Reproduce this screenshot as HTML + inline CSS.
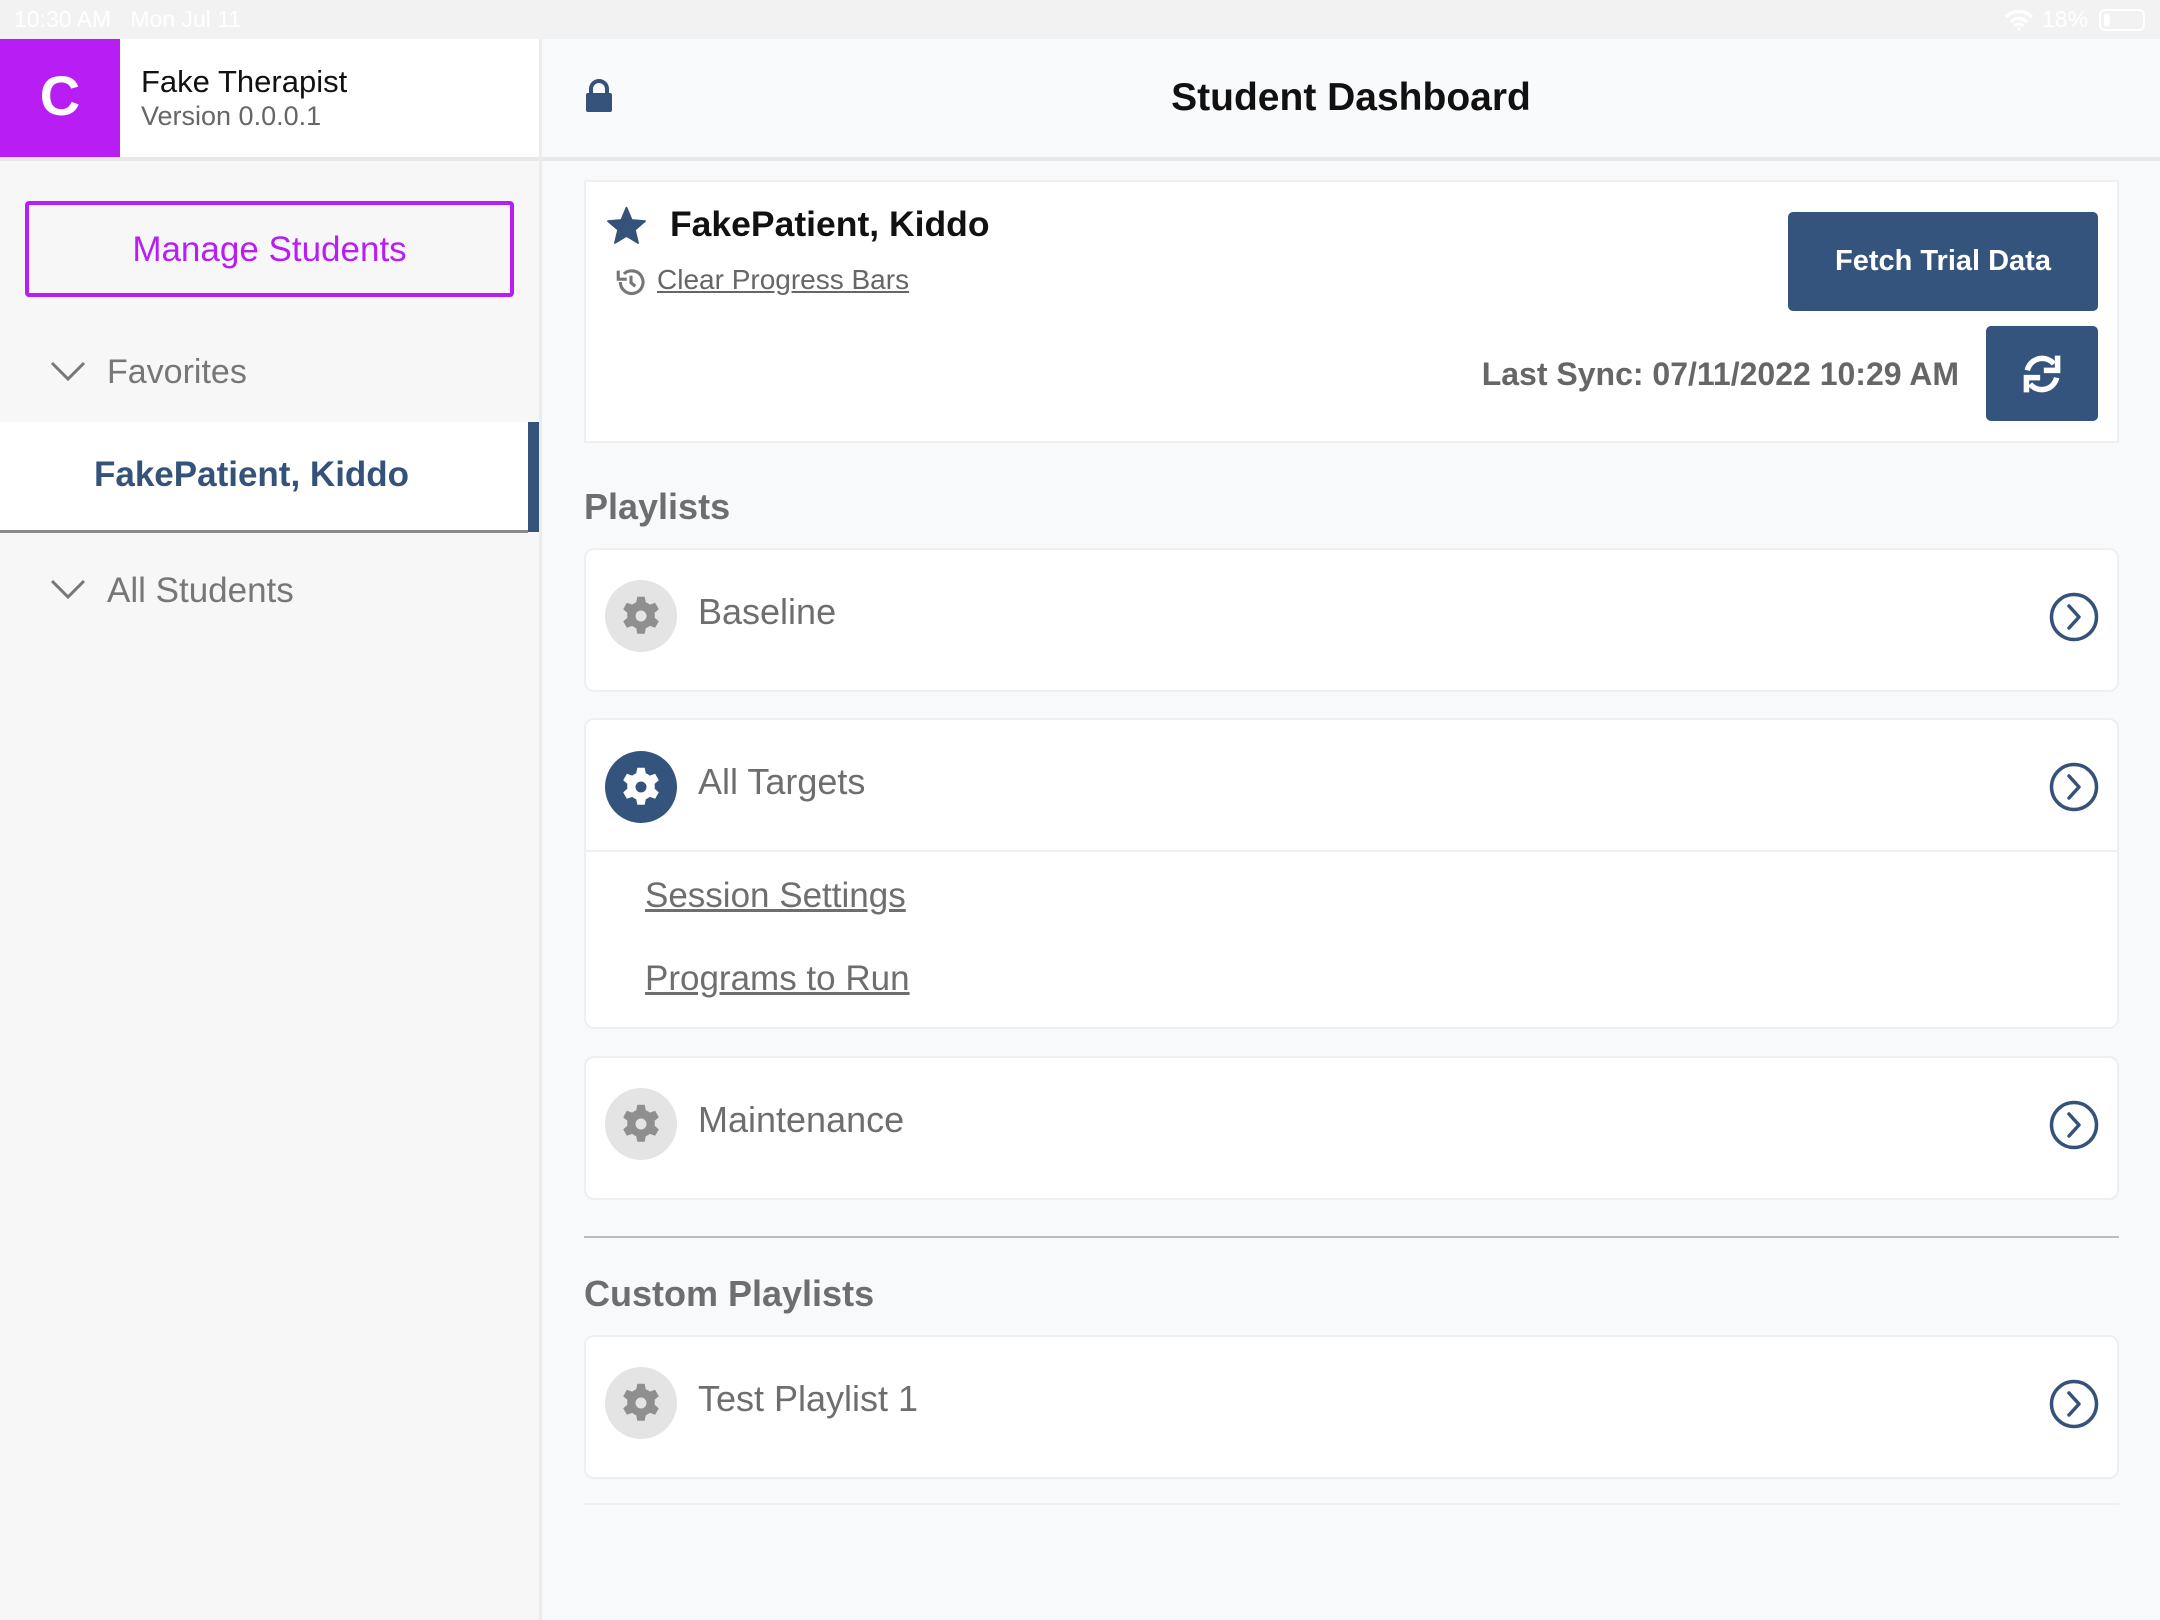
<!DOCTYPE html>
<html><head><meta charset="utf-8"><style>
*{margin:0;padding:0;box-sizing:border-box}
body{width:2160px;height:1620px;position:relative;overflow:hidden;background:#f8f9fb;font-family:"Liberation Sans",sans-serif}
.a{position:absolute}
.t{position:absolute;white-space:nowrap;line-height:1}
.card{position:absolute;background:#fff;border:2px solid #efefef;border-radius:10px;left:584px;width:1535px}
.gear{position:absolute;left:605px;width:72px;height:72px;border-radius:50%;background:#e4e4e4}
.gear svg{position:absolute;left:14px;top:14px}
.lbl{position:absolute;left:698px;font-size:36px;color:#6e6e6e;font-weight:500;line-height:1}
.chev{position:absolute;left:2049px}
</style></head><body>
<div class="a" style="left:0;top:0;width:2160px;height:39px;background:#f2f2f2"></div>
<div class="t" style="left:14px;top:8px;font-size:23px;color:#fff">10:30 AM&nbsp;&nbsp;&nbsp;Mon Jul 11</div>
<div class="t" style="left:2042px;top:8px;font-size:23px;color:#fff">18%</div>
<svg class="a" style="left:2004px;top:9px" width="30" height="22" viewBox="0 0 30 22"><path d="M2 8 A18 18 0 0 1 28 8 M7 13 A11 11 0 0 1 23 13 M11 17 A5 5 0 0 1 19 17" stroke="#fff" stroke-width="3.5" fill="none"/><circle cx="15" cy="20" r="2" fill="#fff"/></svg>
<div class="a" style="left:2099px;top:9px;width:46px;height:22px;border:2px solid #fff;border-radius:6px"><div style="margin:3px;width:6px;height:12px;background:#fff;border-radius:2px"></div></div>

<div class="a" style="left:0;top:39px;width:540px;height:1581px;background:#f7f7f7"></div>
<div class="a" style="left:120px;top:39px;width:420px;height:118px;background:#fff"></div>
<div class="a" style="left:0;top:157px;width:540px;height:4px;background:#e8e8e8"></div>
<div class="a" style="left:0;top:39px;width:120px;height:118px;background:#b81ef4"></div>
<div class="t" style="left:0;top:68px;width:120px;text-align:center;font-size:56px;font-weight:bold;color:#fff">C</div>
<div class="t" style="left:141px;top:66px;font-size:31px;color:#111">Fake Therapist</div>
<div class="t" style="left:141px;top:103px;font-size:27px;color:#666">Version 0.0.0.1</div>
<div class="a" style="left:25px;top:201px;width:489px;height:96px;border:4px solid #b81ef4;border-radius:4px"></div>
<div class="t" style="left:25px;top:232px;width:489px;text-align:center;font-size:35px;color:#b81ef4">Manage Students</div>
<svg class="a" style="left:50px;top:360px" width="36" height="22" viewBox="0 0 36 22"><path d="M2 3 L18 19 L34 3" stroke="#777" stroke-width="3" fill="none"/></svg>
<div class="t" style="left:107px;top:355px;font-size:34px;color:#777">Favorites</div>
<div class="a" style="left:0;top:422px;width:528px;height:110px;background:#fff"></div>
<div class="a" style="left:528px;top:422px;width:11px;height:110px;background:#34527a"></div>
<div class="a" style="left:0;top:530px;width:528px;height:3px;background:#8a8a8a"></div>
<div class="t" style="left:94px;top:457px;font-size:35px;color:#34527a;font-weight:600">FakePatient, Kiddo</div>
<svg class="a" style="left:50px;top:578px" width="36" height="22" viewBox="0 0 36 22"><path d="M2 3 L18 19 L34 3" stroke="#777" stroke-width="3" fill="none"/></svg>
<div class="t" style="left:107px;top:573px;font-size:35px;color:#777">All Students</div>
<div class="a" style="left:539px;top:39px;width:3px;height:1581px;background:#ececec"></div>

<div class="a" style="left:542px;top:39px;width:1618px;height:118px;background:#f9fafc"></div>
<div class="a" style="left:542px;top:157px;width:1618px;height:4px;background:#e8e8e8"></div>
<svg class="a" style="left:585px;top:79px" width="28" height="33" viewBox="0 0 28 33"><path d="M6 15 V10 A8 8 0 0 1 22 10 V15" stroke="#34527a" stroke-width="4" fill="none"/><rect x="1" y="14" width="26" height="19" rx="2" fill="#34527a"/></svg>
<div class="t" style="left:1050px;top:78px;width:602px;text-align:center;font-size:39px;font-weight:600;color:#111">Student Dashboard</div>

<div class="a" style="left:584px;top:180px;width:1535px;height:263px;background:#fff;border:2px solid #efefef"></div>
<svg class="a" style="left:605px;top:205px" width="43" height="42" viewBox="0 0 24 24"><path d="M12 1.5 L15 8.6 L22.6 9.2 L16.8 14.2 L18.6 21.7 L12 17.7 L5.4 21.7 L7.2 14.2 L1.4 9.2 L9 8.6 Z" fill="#34527a" stroke="#34527a" stroke-width="1" stroke-linejoin="round"/></svg>
<div class="t" style="left:670px;top:207px;font-size:35.5px;font-weight:600;color:#111">FakePatient, Kiddo</div>
<svg class="a" style="left:614px;top:265px" width="34" height="34" viewBox="0 0 24 24"><path d="M4.5 12 A8 8 0 1 0 7 6.3" stroke="#777" stroke-width="2.2" fill="none"/><path d="M3 4 V10 H9" stroke="#777" stroke-width="2.2" fill="none"/><path d="M12 7.5 V12.5 L15 15" stroke="#777" stroke-width="2.2" fill="none"/></svg>
<div class="t" style="left:657px;top:266px;font-size:28px;color:#666;text-decoration:underline">Clear Progress Bars</div>
<div class="a" style="left:1788px;top:212px;width:310px;height:99px;background:#34547d;border-radius:5px"></div>
<div class="t" style="left:1788px;top:247px;width:310px;text-align:center;font-size:29px;font-weight:bold;color:#fff">Fetch Trial Data</div>
<div class="a" style="left:1986px;top:326px;width:112px;height:95px;background:#34547d;border-radius:5px"></div>
<svg class="a" style="left:2020px;top:352px" width="44" height="44" viewBox="0 0 24 24"><path d="M4 10 A8.3 8.3 0 0 1 18.5 6.5" stroke="#fff" stroke-width="3" fill="none"/><path d="M20.5 2 V10 H13" fill="none" stroke="#fff" stroke-width="3"/><path d="M20 14 A8.3 8.3 0 0 1 5.5 17.5" stroke="#fff" stroke-width="3" fill="none"/><path d="M3.5 22 V14 H11" fill="none" stroke="#fff" stroke-width="3"/></svg>
<div class="t" style="left:1300px;top:358px;width:659px;text-align:right;font-size:32px;font-weight:bold;color:#666">Last Sync: 07/11/2022 10:29 AM</div>

<div class="t" style="left:584px;top:489px;font-size:36px;font-weight:bold;color:#6e6e6e">Playlists</div>

<div class="card" style="top:548px;height:144px"></div>
<div class="gear" style="top:580px"><svg width="44" height="44" viewBox="0 0 24 24"><path fill="#8f8f8f" fill-rule="evenodd" d="M10 1.5h4l.6 3a7.6 7.6 0 0 1 2.2 1.3l2.9-1 2 3.5-2.3 2a7.6 7.6 0 0 1 0 2.6l2.3 2-2 3.5-2.9-1a7.6 7.6 0 0 1-2.2 1.3l-.6 3h-4l-.6-3a7.6 7.6 0 0 1-2.2-1.3l-2.9 1-2-3.5 2.3-2a7.6 7.6 0 0 1 0-2.6l-2.3-2 2-3.5 2.9 1a7.6 7.6 0 0 1 2.2-1.3zM12 9a3 3 0 1 0 0 6 3 3 0 1 0 0-6z"/></svg></div>
<div class="lbl" style="top:594px">Baseline</div>
<svg class="chev" style="top:592px" width="50" height="50" viewBox="0 0 50 50"><circle cx="25" cy="25" r="22.5" stroke="#34527a" stroke-width="3.5" fill="none"/><path d="M20 14 L30 25 L20 36" stroke="#34527a" stroke-width="3.5" fill="none" stroke-linecap="round" stroke-linejoin="round"/></svg>

<div class="card" style="top:718px;height:311px"></div>
<div class="a" style="left:586px;top:850px;width:1531px;height:2px;background:#efefef"></div>
<div class="gear" style="top:751px;background:#34547d"><svg width="44" height="44" viewBox="0 0 24 24"><path fill="#fff" fill-rule="evenodd" d="M10 1.5h4l.6 3a7.6 7.6 0 0 1 2.2 1.3l2.9-1 2 3.5-2.3 2a7.6 7.6 0 0 1 0 2.6l2.3 2-2 3.5-2.9-1a7.6 7.6 0 0 1-2.2 1.3l-.6 3h-4l-.6-3a7.6 7.6 0 0 1-2.2-1.3l-2.9 1-2-3.5 2.3-2a7.6 7.6 0 0 1 0-2.6l-2.3-2 2-3.5 2.9 1a7.6 7.6 0 0 1 2.2-1.3zM12 9a3 3 0 1 0 0 6 3 3 0 1 0 0-6z"/></svg></div>
<div class="lbl" style="top:764px">All Targets</div>
<svg class="chev" style="top:762px" width="50" height="50" viewBox="0 0 50 50"><circle cx="25" cy="25" r="22.5" stroke="#34527a" stroke-width="3.5" fill="none"/><path d="M20 14 L30 25 L20 36" stroke="#34527a" stroke-width="3.5" fill="none" stroke-linecap="round" stroke-linejoin="round"/></svg>
<div class="t" style="left:645px;top:878px;font-size:35px;color:#6e6e6e;text-decoration:underline">Session Settings</div>
<div class="t" style="left:645px;top:961px;font-size:35px;color:#6e6e6e;text-decoration:underline">Programs to Run</div>

<div class="card" style="top:1056px;height:144px"></div>
<div class="gear" style="top:1088px"><svg width="44" height="44" viewBox="0 0 24 24"><path fill="#8f8f8f" fill-rule="evenodd" d="M10 1.5h4l.6 3a7.6 7.6 0 0 1 2.2 1.3l2.9-1 2 3.5-2.3 2a7.6 7.6 0 0 1 0 2.6l2.3 2-2 3.5-2.9-1a7.6 7.6 0 0 1-2.2 1.3l-.6 3h-4l-.6-3a7.6 7.6 0 0 1-2.2-1.3l-2.9 1-2-3.5 2.3-2a7.6 7.6 0 0 1 0-2.6l-2.3-2 2-3.5 2.9 1a7.6 7.6 0 0 1 2.2-1.3zM12 9a3 3 0 1 0 0 6 3 3 0 1 0 0-6z"/></svg></div>
<div class="lbl" style="top:1102px">Maintenance</div>
<svg class="chev" style="top:1100px" width="50" height="50" viewBox="0 0 50 50"><circle cx="25" cy="25" r="22.5" stroke="#34527a" stroke-width="3.5" fill="none"/><path d="M20 14 L30 25 L20 36" stroke="#34527a" stroke-width="3.5" fill="none" stroke-linecap="round" stroke-linejoin="round"/></svg>

<div class="a" style="left:584px;top:1236px;width:1535px;height:2px;background:#bdbdbd"></div>
<div class="t" style="left:584px;top:1276px;font-size:36px;font-weight:bold;color:#6e6e6e">Custom Playlists</div>

<div class="card" style="top:1335px;height:144px"></div>
<div class="gear" style="top:1367px"><svg width="44" height="44" viewBox="0 0 24 24"><path fill="#8f8f8f" fill-rule="evenodd" d="M10 1.5h4l.6 3a7.6 7.6 0 0 1 2.2 1.3l2.9-1 2 3.5-2.3 2a7.6 7.6 0 0 1 0 2.6l2.3 2-2 3.5-2.9-1a7.6 7.6 0 0 1-2.2 1.3l-.6 3h-4l-.6-3a7.6 7.6 0 0 1-2.2-1.3l-2.9 1-2-3.5 2.3-2a7.6 7.6 0 0 1 0-2.6l-2.3-2 2-3.5 2.9 1a7.6 7.6 0 0 1 2.2-1.3zM12 9a3 3 0 1 0 0 6 3 3 0 1 0 0-6z"/></svg></div>
<div class="lbl" style="top:1381px">Test Playlist 1</div>
<svg class="chev" style="top:1379px" width="50" height="50" viewBox="0 0 50 50"><circle cx="25" cy="25" r="22.5" stroke="#34527a" stroke-width="3.5" fill="none"/><path d="M20 14 L30 25 L20 36" stroke="#34527a" stroke-width="3.5" fill="none" stroke-linecap="round" stroke-linejoin="round"/></svg>

<div class="a" style="left:584px;top:1503px;width:1535px;height:2px;background:#efefef"></div>
</body></html>
